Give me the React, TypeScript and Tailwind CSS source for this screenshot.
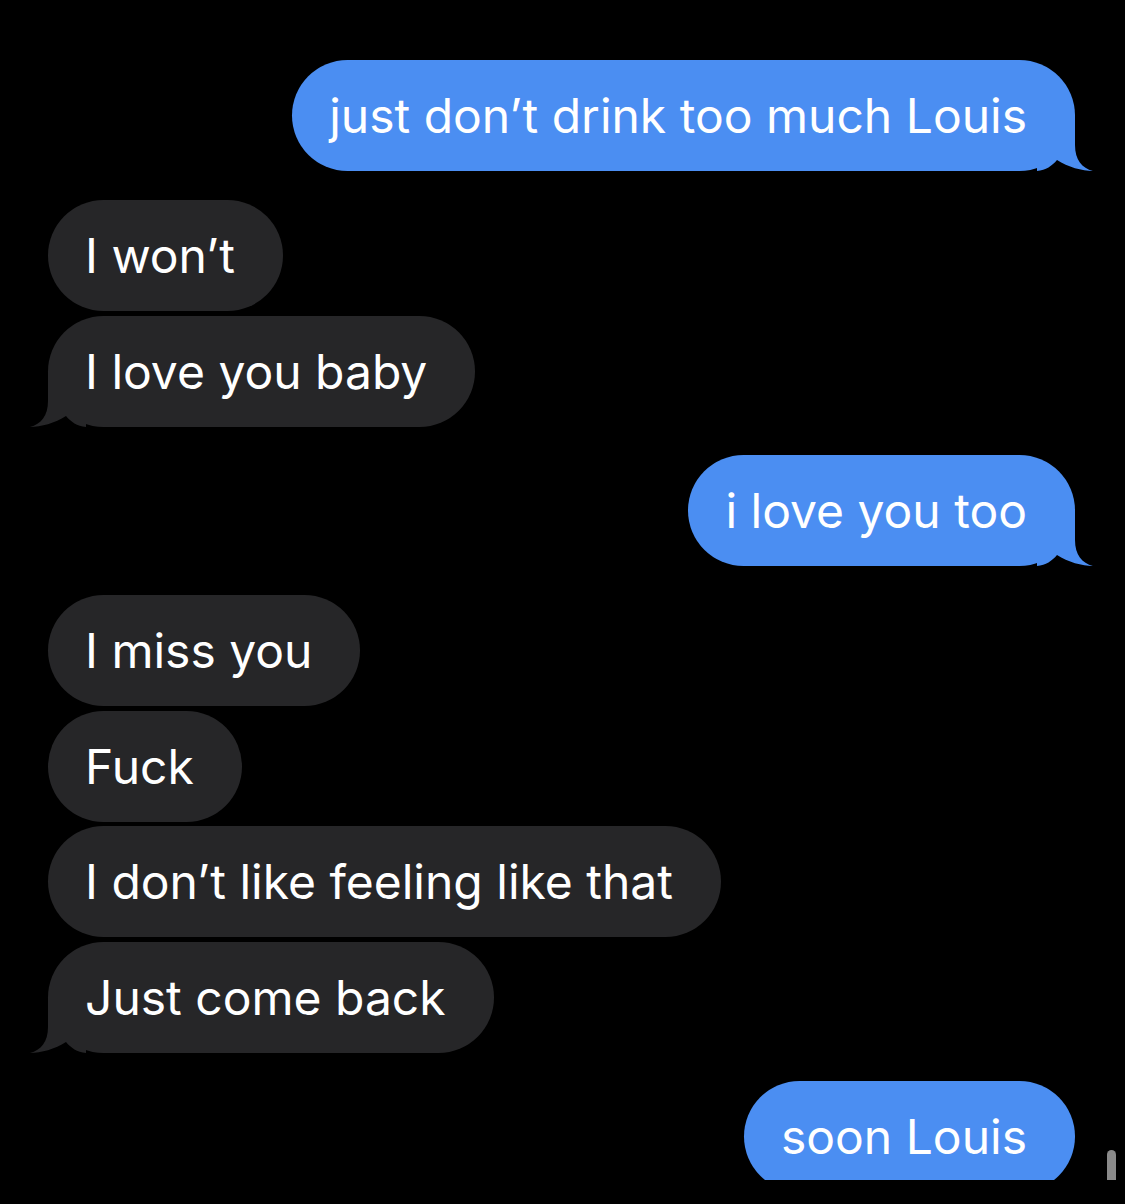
const MESSAGES = [
  { text: 'just don\u2019t drink too much Louis', me: true, tail: true, gap: 'mt-[60px]' },
  { text: 'I won\u2019t', me: false, tail: false, gap: 'mt-[29px]' },
  { text: 'I love you baby', me: false, tail: true, gap: 'mt-[5px]' },
  { text: 'i love you too', me: true, tail: true, gap: 'mt-[28px]' },
  { text: 'I miss you', me: false, tail: false, gap: 'mt-[29px]' },
  { text: 'Fuck', me: false, tail: false, gap: 'mt-[5px]' },
  { text: 'I don\u2019t like feeling like that', me: false, tail: false, gap: 'mt-[4px]' },
  { text: 'Just come back', me: false, tail: true, gap: 'mt-[5px]' },
  { text: 'soon Louis', me: true, tail: false, gap: 'mt-[28px]' },
]

function Tail({ me }: { me: boolean }) {
  return (
    <svg
      width="60"
      height="56"
      viewBox="0 0 60 56"
      className={`absolute bottom-0 ${me ? 'right-[-22px] fill-[#4b8ef2]' : 'left-[-22px] -scale-x-100 fill-[#262628]'}`}
    >
      <path d="M0 0 H38 V30 C38 45 45 53 56 56 C45 56 31 52 20 45 C15 51 9 55 0 56 Z" />
    </svg>
  )
}

function Bubble({ text, me, tail }: { text: string; me: boolean; tail: boolean }) {
  return (
    <div
      className={`relative rounded-[56px] h-[111px] flex items-center pl-[37px] pr-[48px] text-[48px] text-white ${
        me ? 'bg-[#4b8ef2] self-end' : 'bg-[#262628] self-start'
      }`}
    >
      {tail && <Tail me={me} />}
      <span className="relative leading-none whitespace-nowrap">{text}</span>
    </div>
  )
}

export default function App() {
  return (
    <div
      className="relative w-[1125px] h-[1204px] bg-black overflow-hidden"
      style={{ fontFamily: 'Inter, "Liberation Sans", sans-serif' }}
    >
      <div className="h-[1180px] overflow-hidden flex flex-col pl-[48px] pr-[50px]">
        {MESSAGES.map((m, i) => (
          <div key={i} className={`flex flex-col ${m.gap}`}>
            <Bubble text={m.text} me={m.me} tail={m.tail} />
          </div>
        ))}
      </div>
      <div className="absolute left-[1107px] top-[1150px] w-[9px] h-[30px] rounded-t-full bg-[#8a8a8a]" />
    </div>
  )
}
